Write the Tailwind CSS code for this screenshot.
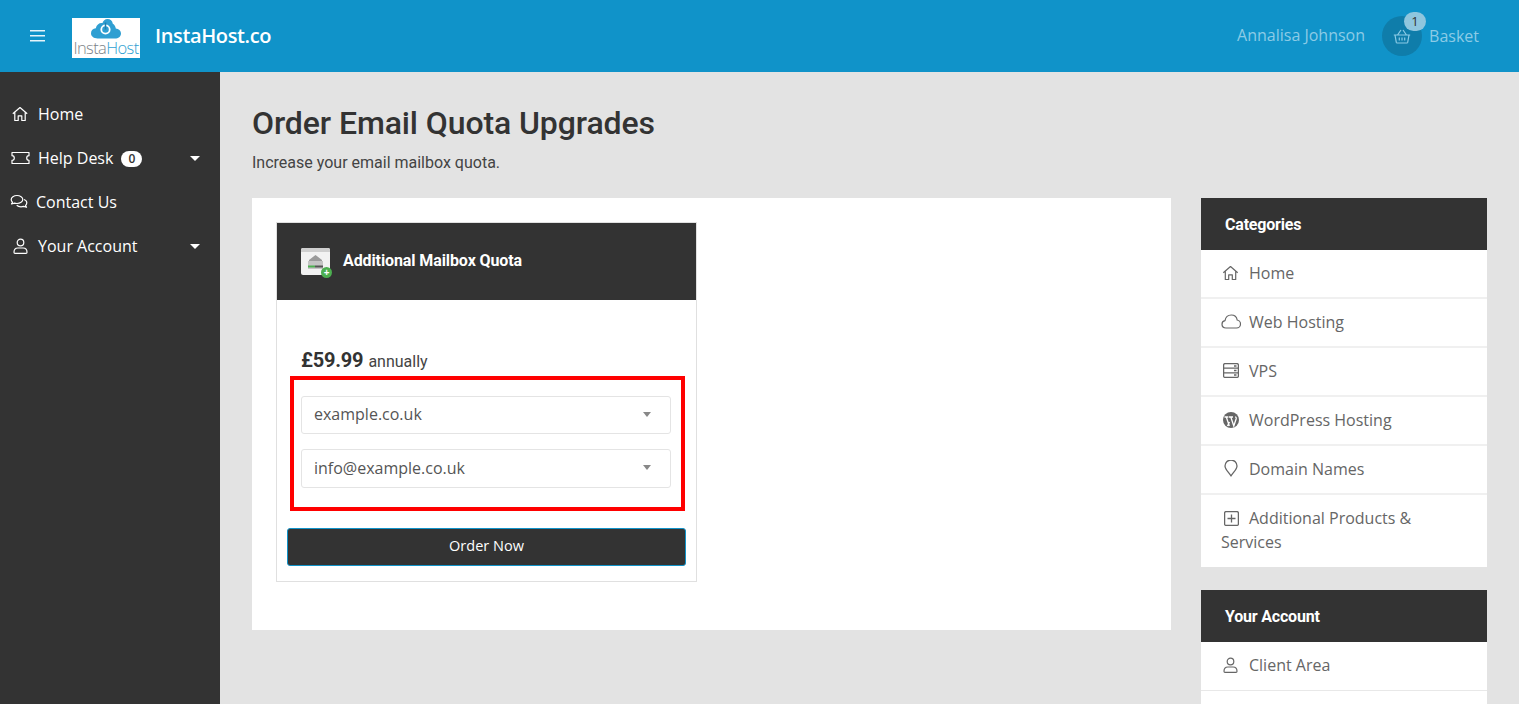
<!DOCTYPE html>
<html lang="en">
<head>
    <meta charset="UTF-8">
    <meta name="viewport" content="width=device-width, initial-scale=1.0">
    <title>Order Email Quota Upgrades</title>
    <script src="https://cdn.jsdelivr.net/npm/@tailwindcss/browser@4"></script>
</head>
<body class="h-[704px] overflow-hidden bg-[#e3e3e3] font-['Open_Sans',sans-serif] text-[#333]">
    <!-- top bar -->
    <header class="h-[72px] bg-[#1093c9] flex items-center">
        <svg class="ml-[30px] w-[15px] h-[12px] text-[#e6f4fa]" viewBox="0 0 15 12" fill="currentColor"><rect y="0" width="15" height="1.500"/><rect y="5" width="15" height="1.500"/><rect y="10" width="15" height="1.500"/></svg>
        <div class="ml-[27px] mt-[3px] w-[68px] h-[40px] bg-white flex flex-col items-center">
            <svg class="mt-[1px] w-[30px] h-[20px] shrink-0" viewBox="0 0 30 20"><path d="M6.500 19.500C3 19.500 0 17.500 0 14.300c0-2.800 2-4.800 4.800-5C5.500 5.500 8.500 3.500 11.500 4c.5-2.300 2.500-4 5-4 2.800 0 5 2 5.300 4.800 1.700 1 2.700 2.600 3 4.600 2.800.3 5.200 2 5.200 5 0 3-2.700 5.100-6 5.100z" fill="#2f9fd2"/><circle cx="14.500" cy="10.500" r="4.200" fill="none" stroke="#fff" stroke-width="1.800"/><path d="M14.500 3.500v7" stroke="#1f7fae" stroke-width="1.500"/></svg>
            <div class="mt-[1px] text-[16.500px] leading-[16px] tracking-[-0.6px] font-light whitespace-nowrap text-[#7d8388]">Insta<span class="text-[#2f9fd2]">Host</span></div>
        </div>
        <div class="ml-[15px] text-[20px] font-semibold text-white tracking-[-0.37px]">InstaHost.co</div>
        <div class="ml-auto -mt-[2px] flex items-center text-[16px] text-[#8ccbe6]">
            <span>Annalisa Johnson</span>
            <div class="relative ml-[17px] mt-[2px] w-[40px] h-[40px] rounded-full bg-[#0f7daa] flex items-center justify-center">
                <svg class="w-[18px] h-[15px] text-[#8ccbe6]" viewBox="0 0 18 15" fill="none" stroke="currentColor" stroke-width="1.200" stroke-linejoin="round"><path d="M.8 6h16.400M2 6l1.300 7.400a.8.8 0 0 0 .8.600h9.800a.8.8 0 0 0 .8-.600L16 6M4.500 6L8 1M13.500 6L10 1M6.300 8.500v3M9 8.500v3M11.700 8.500v3"/></svg>
                <span class="absolute -top-[4px] left-[22px] w-[22px] h-[19px] rounded-full bg-[#8fc6de] text-[#333] text-[13px] leading-[19px] text-center">1</span>
            </div>
            <span class="ml-[7px] mr-[40px] mt-[2px]">Basket</span>
        </div>
    </header>

    <div class="flex h-[632px]">
        <!-- left menu -->
        <nav class="w-[220px] shrink-0 bg-[#333] text-white text-[16px] pt-[20px]">
            <a class="h-[44px] flex items-center pl-[12px]">
                <svg class="w-[16px] h-[16px] mr-[10px]" viewBox="0 0 16 16" fill="none" stroke="currentColor" stroke-width="1.200" stroke-linejoin="round"><path d="M.8 7.800L8 1.500l7.200 6.300M2.800 6.300V14.500h3.400V9.800h3.600v4.700h3.400V6.300"/></svg>
                Home
            </a>
            <a class="h-[44px] flex items-center pl-[11px] pr-[20px]">
                <svg class="w-[19px] h-[14px] mr-[8px]" viewBox="0 0 19 14" fill="none" stroke="currentColor" stroke-width="1.200" stroke-linejoin="round"><path d="M1 1.500h17v3.200a2.300 2.300 0 0 0 0 4.600v3.200H1V9.300a2.300 2.300 0 0 0 0-4.600z"/></svg>
                Help Desk
                <span class="ml-[8px] mt-[1px] w-[21px] h-[16px] rounded-full bg-white text-[#333] text-[12px] font-semibold leading-[16px] text-center">0</span>
                <span class="ml-auto w-0 h-0 border-x-[5px] border-x-transparent border-t-[5px] border-t-white"></span>
            </a>
            <a class="h-[44px] flex items-center pl-[10px]">
                <svg class="w-[18px] h-[16px] mr-[8px]" viewBox="0 0 18 16" fill="none" stroke="currentColor" stroke-width="1.200" stroke-linejoin="round"><path d="M7 1.500c-3.200 0-5.800 1.800-5.800 4 0 1 .5 1.900 1.300 2.600L1.500 10l3-.9c.8.300 1.600.4 2.500.4 3.200 0 5.800-1.800 5.800-4s-2.600-4-5.800-4z"/><path d="M14 5.500c1.700.6 2.800 1.900 2.800 3.300 0 1-.5 1.900-1.300 2.600l1 1.900-3-.9c-.8.300-1.600.4-2.500.4-1.700 0-3.300-.6-4.300-1.500"/></svg>
                Contact Us
            </a>
            <a class="h-[44px] flex items-center pl-[13px] pr-[20px]">
                <svg class="w-[15px] h-[16px] mr-[10px]" viewBox="0 0 15 16" fill="none" stroke="currentColor" stroke-width="1.200" stroke-linejoin="round"><circle cx="7.500" cy="4.500" r="3.300"/><path d="M1 14.200c0-2.600 1.800-4.200 3.800-4.200h5.400c2 0 3.800 1.600 3.800 4.200 0 .7-.4 1.100-1 1.100H2c-.6 0-1-.4-1-1.100z"/></svg>
                Your Account
                <span class="ml-auto w-0 h-0 border-x-[5px] border-x-transparent border-t-[5px] border-t-white"></span>
            </a>
        </nav>

        <!-- page content -->
        <main class="flex-1 pl-[32px] pr-[32px] pt-[31px] overflow-hidden">
            <h1 class="font-['Roboto',sans-serif] font-medium text-[32px] leading-[40px] tracking-[-0.1px] text-[#333]">Order Email Quota Upgrades</h1>
            <p class="mt-[10px] font-['Roboto',sans-serif] text-[16px] leading-[20px] text-[#444]">Increase your email mailbox quota.</p>

            <div class="mt-[25px] flex gap-[30px] items-start">
                <section class="w-[919px] h-[432px] bg-white p-[24px]">
                    <div class="w-[421px] h-[360px] border border-[#e0e0e0]">
                        <div class="h-[77px] bg-[#333] flex items-center pl-[24px]">
                            <div class="relative w-[29px] h-[27px] rounded-[2px] bg-[#f2f2f2] flex flex-col items-center">
                                <div class="w-full h-[4px] bg-[#cfcfcf] rounded-t-[2px]"></div>
                                <svg class="mt-[3px] w-[17px] h-[14px]" viewBox="0 0 17 14"><path d="M8.500 0L15 5v1H2V5z" fill="#9a9a9a"/><path d="M1 6h15v8H1z" fill="#c4c4c4"/><rect x="1" y="10.500" width="7" height="2" fill="#4caf50"/><rect x="8" y="10.500" width="8" height="2" fill="#555"/></svg>
                                <span class="absolute -bottom-[3px] -right-[2px] w-[11px] h-[11px] rounded-full bg-[#4caf50] text-white text-[10px] font-bold leading-[10px] text-center">+</span>
                            </div>
                            <div class="ml-[13px] -mt-[1px] font-['Roboto',sans-serif] font-bold text-[16px] text-white tracking-[-0.1px]">Additional Mailbox Quota</div>
                        </div>
                        <div class="pt-[45px] pl-[24px] h-[31px] box-content font-['Roboto',sans-serif] flex items-baseline">
                            <span class="font-bold text-[20px] leading-[30px] tracking-[-0.2px] text-[#333]">£59.99</span>
                            <span class="ml-[5px] text-[16px] text-[#444]">annually</span>
                        </div>
                        <div class="ml-[13px] w-[395px] h-[135px] border-4 border-[#ff0000] pt-[16px] pl-[7px] pr-[10px]">
                            <div class="h-[38px] pb-[2px] border border-[#e4e4e4] rounded-[3px] flex items-center pl-[12px] pr-[19px] text-[16px] text-[#555]">
                                example.co.uk
                                <span class="ml-auto w-0 h-0 border-x-[4px] border-x-transparent border-t-[5px] border-t-[#888]"></span>
                            </div>
                            <div class="mt-[15px] h-[39px] pb-[2px] border border-[#e4e4e4] rounded-[3px] flex items-center pl-[12px] pr-[19px] text-[16px] text-[#555]">
                                info@example.co.uk
                                <span class="ml-auto w-0 h-0 border-x-[4px] border-x-transparent border-t-[5px] border-t-[#888]"></span>
                            </div>
                        </div>
                        <button class="mt-[17px] ml-[10px] w-[399px] h-[38px] pb-[2px] bg-[#333] border border-[#1093c9] rounded-[3px] text-[14.500px] font-medium text-white">Order Now</button>
                    </div>
                </section>

                <aside class="w-[286px] shrink-0 text-[16px] text-[#666]">
                    <div class="h-[52px] pt-[2px] bg-[#333] flex items-center pl-[24px] font-['Roboto',sans-serif] font-bold text-[16px] text-white tracking-[-0.2px]">Categories</div>
                    <ul class="bg-white">
                        <li class="h-[49px] pb-[2px] border-b-2 border-[#f0f0f0] flex items-center pl-[21px]">
                            <svg class="w-[17px] h-[16px] mr-[10px]" viewBox="0 0 16 16" fill="none" stroke="currentColor" stroke-width="1.200" stroke-linejoin="round"><path d="M.8 7.800L8 1.500l7.200 6.300M2.800 6.300V14.500h3.400V9.800h3.600v4.700h3.400V6.300"/></svg>
                            Home
                        </li>
                        <li class="h-[49px] pb-[2px] border-b-2 border-[#f0f0f0] flex items-center pl-[20px]">
                            <svg class="w-[20px] h-[15px] mr-[8px]" viewBox="0 0 20 15" fill="none" stroke="currentColor" stroke-width="1.200"><path d="M5 14C2.500 14 1 12.300 1 10.200 1 8.300 2.300 6.900 4 6.600 4.600 3.300 7.200 1 10.300 1c3 0 5.400 2.100 5.900 5 2 .4 3.300 2 3.300 3.900 0 2.300-1.800 4.100-4 4.100z"/></svg>
                            Web Hosting
                        </li>
                        <li class="h-[49px] pb-[2px] border-b-2 border-[#f0f0f0] flex items-center pl-[22px]">
                            <svg class="w-[16px] h-[15px] mr-[10px]" viewBox="0 0 16 15" fill="none" stroke="currentColor" stroke-width="1.300"><rect x=".6" y=".6" width="14.800" height="13.800" rx="1.500"/><path d="M.6 5.200h14.800M.6 9.800h14.800M11 3h2.500M11 7.500h2.500M11 12h2.500"/></svg>
                            VPS
                        </li>
                        <li class="h-[49px] pb-[2px] border-b-2 border-[#f0f0f0] flex items-center pl-[22px]">
                            <svg class="w-[16px] h-[16px] mr-[10px]" viewBox="0 0 16 16"><circle cx="8" cy="8" r="8" fill="currentColor"/><path d="M1.500 5h3.700M3.300 5l3 9M5.800 5h4.200M7.800 5l3 9 2.300-7c.3-1-.2-2-.9-2M6.500 10l-2 4" fill="none" stroke="#fff" stroke-width="1.300"/></svg>
                            WordPress Hosting
                        </li>
                        <li class="h-[49px] pb-[2px] border-b-2 border-[#f0f0f0] flex items-center pl-[23px]">
                            <svg class="w-[14px] h-[17px] mr-[11px]" viewBox="0 0 14 17" fill="none" stroke="currentColor" stroke-width="1.300" stroke-linejoin="round"><path d="M7 16C5 12.500 1 9.500 1 6a6 6 0 0 1 12 0c0 3.500-4 6.500-6 10z"/></svg>
                            Domain Names
                        </li>
                        <li class="h-[72px] pl-[20px] pr-[20px] pt-[11px] leading-[24px]">
                            <svg class="inline-block align-[-2px] w-[15px] h-[15px] ml-[3px] mr-[10px]" viewBox="0 0 15 15" fill="none" stroke="currentColor" stroke-width="1.300"><rect x=".6" y=".6" width="13.800" height="13.800" rx="1.500"/><path d="M7.500 3.500v8M3.500 7.500h8"/></svg>Additional Products &amp; Services
                        </li>
                    </ul>
                    <div class="mt-[23px] h-[52px] pt-[2px] bg-[#333] flex items-center pl-[24px] font-['Roboto',sans-serif] font-bold text-[16px] text-white tracking-[-0.2px]">Your Account</div>
                    <ul class="bg-white">
                        <li class="h-[49px] pb-[2px] border-b border-[#e8e8e8] flex items-center pl-[22px]">
                            <svg class="w-[15px] h-[16px] mr-[11px]" viewBox="0 0 15 16" fill="none" stroke="currentColor" stroke-width="1.200" stroke-linejoin="round"><circle cx="7.500" cy="4.500" r="3.300"/><path d="M1 14.200c0-2.600 1.800-4.200 3.800-4.200h5.400c2 0 3.800 1.600 3.800 4.200 0 .7-.4 1.100-1 1.100H2c-.6 0-1-.4-1-1.100z"/></svg>
                            Client Area
                        </li>
                        <li class="h-[49px]"></li>
                    </ul>
                </aside>
            </div>
        </main>
    </div>
</body>
</html>
